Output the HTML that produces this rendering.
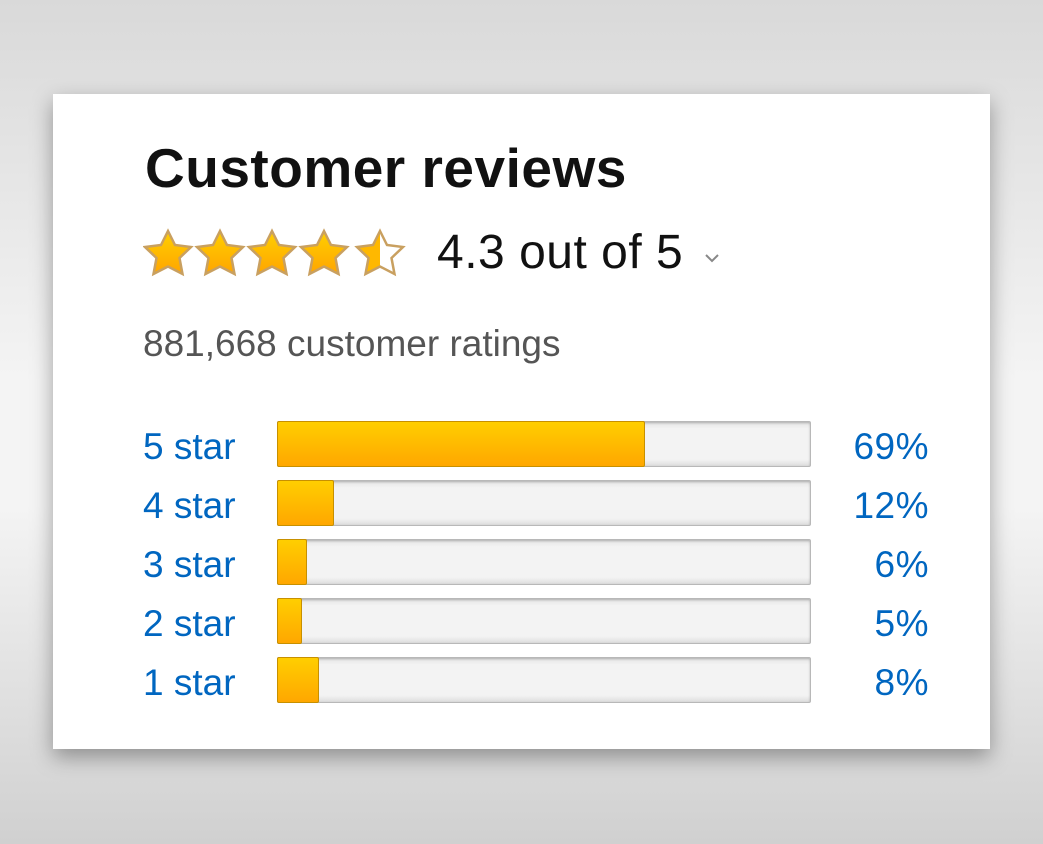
<!DOCTYPE html>
<html><head><meta charset="utf-8"><style>
body{margin:0;width:1043px;height:844px;overflow:hidden;background:linear-gradient(#d9d9d9 0%,#f4f4f4 45%,#f4f4f4 60%,#d0d0d0 100%);font-family:"Liberation Sans",Arial,sans-serif;position:relative}
.card{position:absolute;left:53px;top:94px;width:937px;height:655px;background:#fff;box-shadow:0 8px 20px rgba(0,0,0,.35)}
.t{position:absolute;left:145px;top:136px;font-size:55px;font-weight:bold;color:#111;letter-spacing:0.5px;white-space:nowrap}
.stars{position:absolute;left:143px;top:228px}
.r{position:absolute;left:437px;top:225px;font-size:48px;color:#111;white-space:nowrap;letter-spacing:0.5px}
.chev{position:absolute;left:704px;top:252px}
.cnt{position:absolute;left:143px;top:323px;font-size:37px;color:#555;white-space:nowrap}
.lab{position:absolute;left:143px;font-size:37px;color:#0066c0;white-space:nowrap}
.pct{position:absolute;right:114px;font-size:37px;color:#0066c0;text-align:right;letter-spacing:0.5px}
.bar{position:absolute;left:277px;width:532px;height:44px;background:linear-gradient(#e4e4e4,#f3f3f3 15%,#f3f3f3 85%,#ddd);border:1px solid #b8b8b8;border-radius:2px;box-shadow:inset 0 1px 2px rgba(0,0,0,.25)}
.fill{position:absolute;left:-1px;top:-1px;height:44px;background:linear-gradient(#ffce00,#ffa700);border:1px solid #c79000;border-radius:2px}
</style></head><body>
<div class="card"></div>
<div class="t">Customer reviews</div>
<svg class="stars" width="270" height="54" viewBox="0 0 270 54">
<defs><linearGradient id="g" x1="0" y1="0" x2="0" y2="1"><stop offset="0" stop-color="#ffd000"/><stop offset="1" stop-color="#ffa500"/></linearGradient>
<linearGradient id="h" x1="0" y1="0" x2="1" y2="0"><stop offset="0.5" stop-color="#ffb800"/><stop offset="0.5" stop-color="#fff"/></linearGradient>
<path id="s" d="M25 3 L32 17 L48 19 L36.5 30 L39.5 46 L25 38.5 L10.5 46 L13.5 30 L2 19 L18 17 Z"/></defs>
<use href="#s" x="0" fill="url(#g)" stroke="#c9a060" stroke-width="2.5"/>
<use href="#s" x="52" fill="url(#g)" stroke="#c9a060" stroke-width="2.5"/>
<use href="#s" x="104" fill="url(#g)" stroke="#c9a060" stroke-width="2.5"/>
<use href="#s" x="156" fill="url(#g)" stroke="#c9a060" stroke-width="2.5"/>
<use href="#s" x="212" fill="url(#h)" stroke="#c9a060" stroke-width="2.5"/>
</svg>
<div class="r">4.3 out of 5</div>
<svg class="chev" width="16" height="12"><path d="M2 3 L8 9 L14 3" fill="none" stroke="#888" stroke-width="2"/></svg>
<div class="cnt">881,668 customer ratings</div>

<div class="lab" style="top:426px">5 star</div><div class="bar" style="top:421px"><div class="fill" style="width:366px"></div></div><div class="pct" style="top:426px">69%</div>
<div class="lab" style="top:485px">4 star</div><div class="bar" style="top:480px"><div class="fill" style="width:55px"></div></div><div class="pct" style="top:485px">12%</div>
<div class="lab" style="top:544px">3 star</div><div class="bar" style="top:539px"><div class="fill" style="width:28px"></div></div><div class="pct" style="top:544px">6%</div>
<div class="lab" style="top:603px">2 star</div><div class="bar" style="top:598px"><div class="fill" style="width:23px"></div></div><div class="pct" style="top:603px">5%</div>
<div class="lab" style="top:662px">1 star</div><div class="bar" style="top:657px"><div class="fill" style="width:40px"></div></div><div class="pct" style="top:662px">8%</div>
</body></html>
